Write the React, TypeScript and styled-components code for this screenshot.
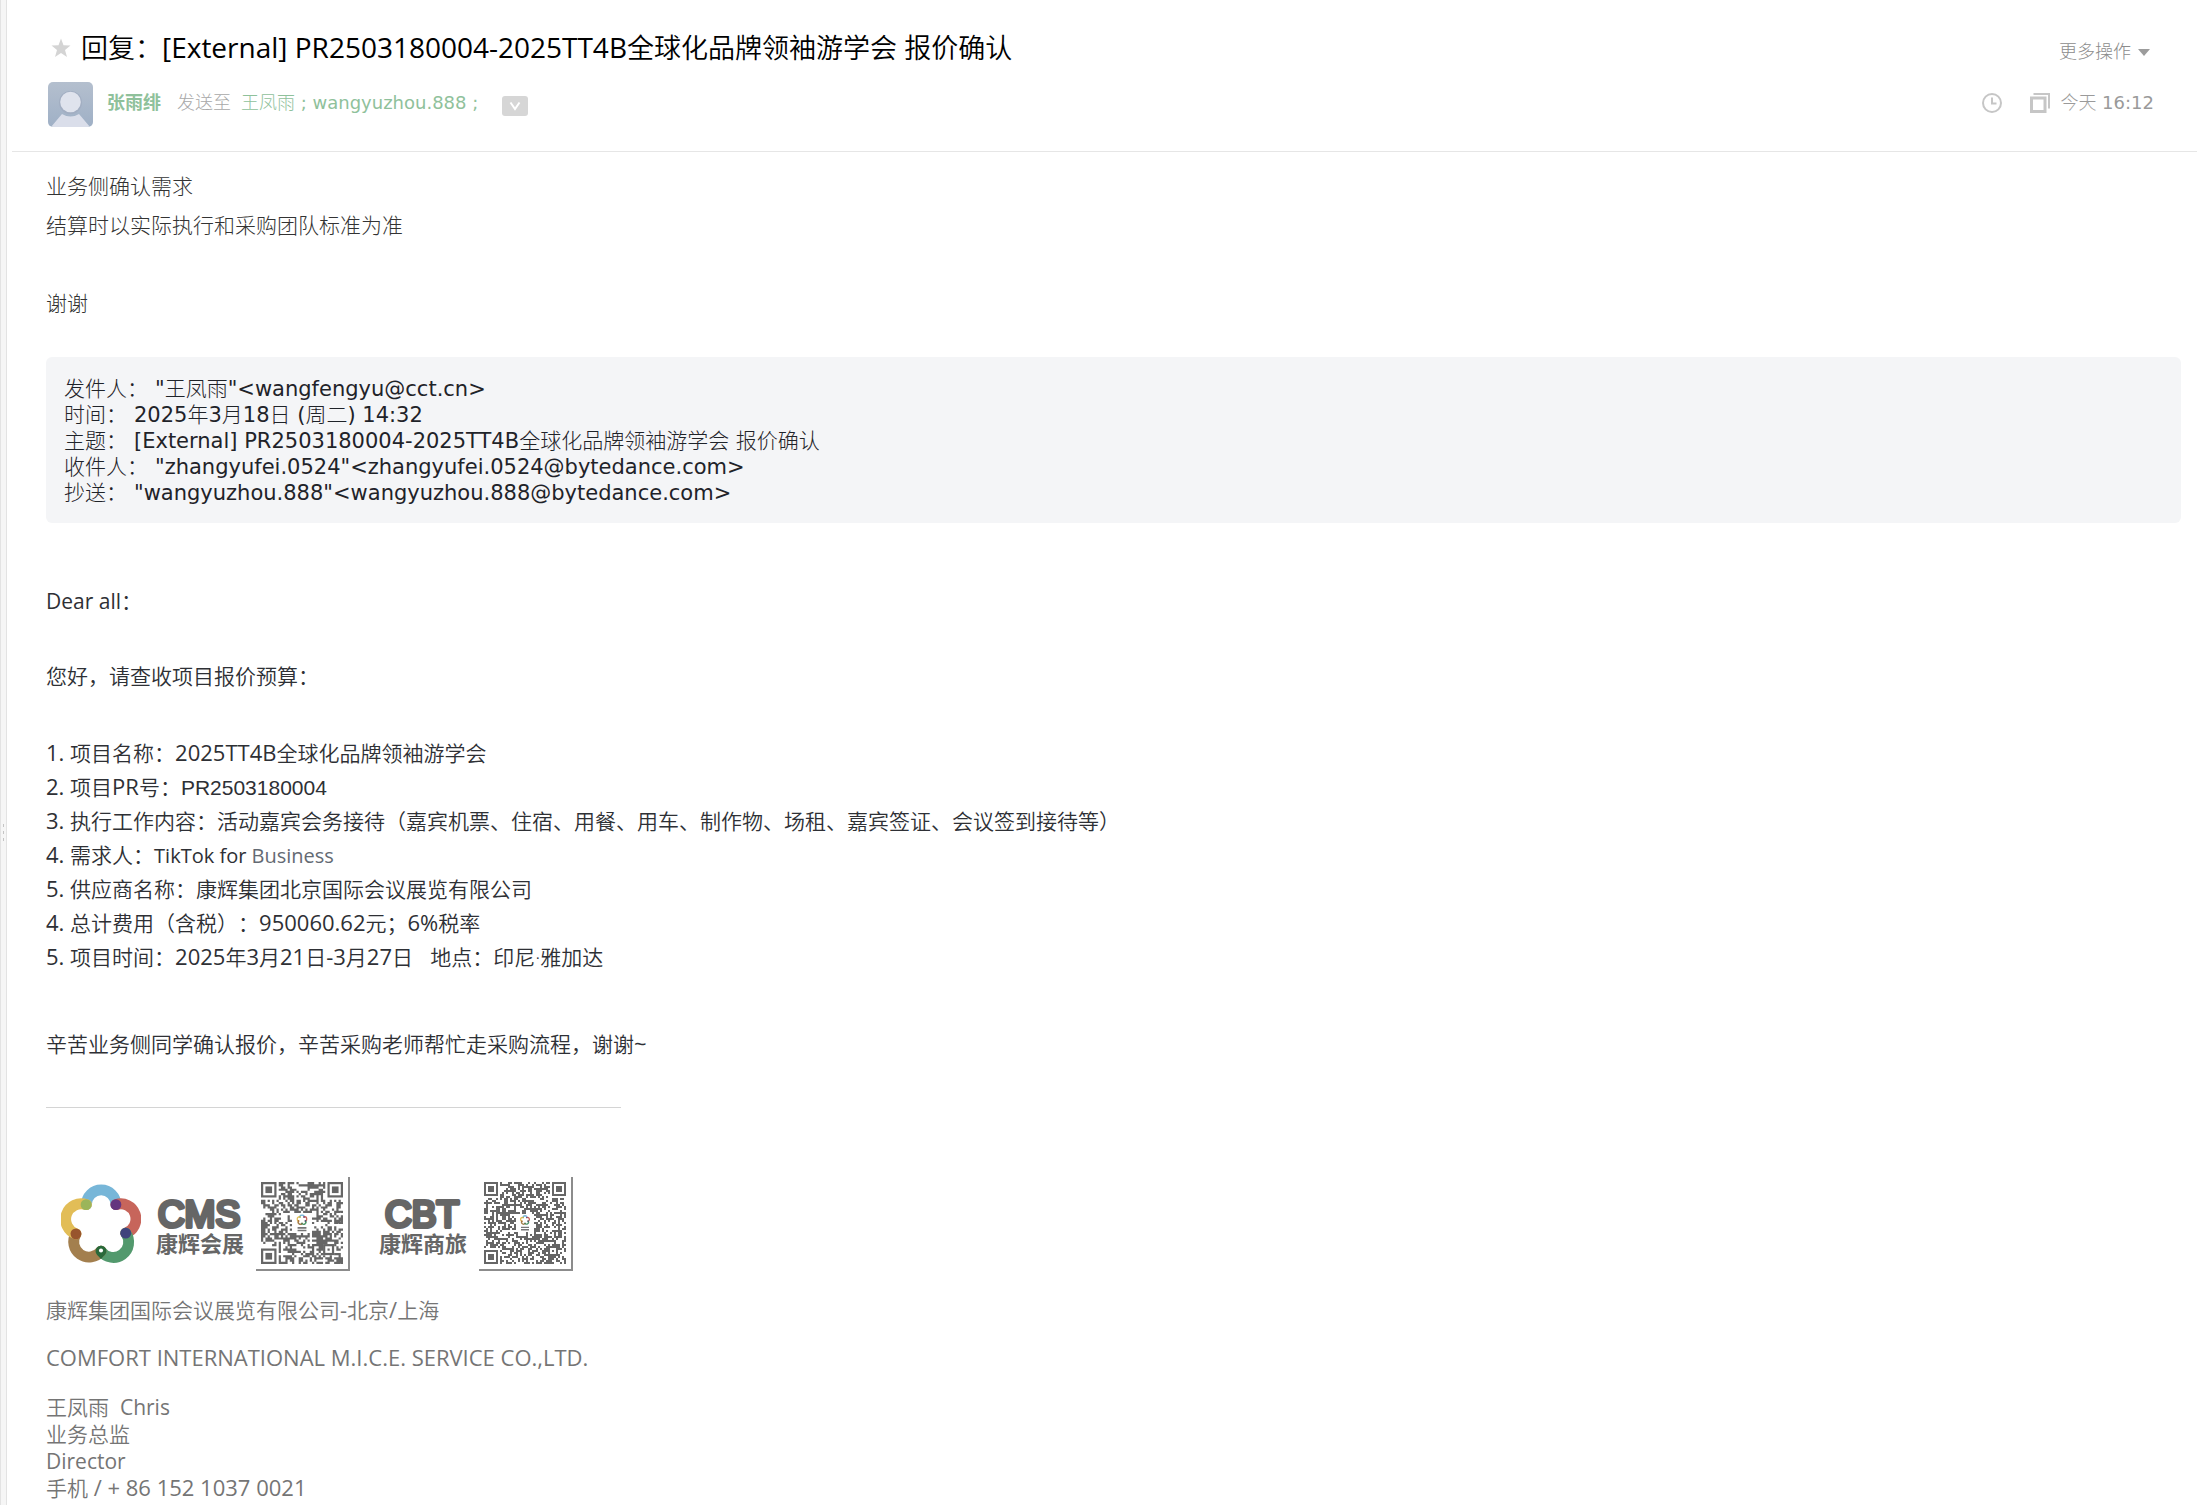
import React from "react";
import styled, { createGlobalStyle } from "styled-components";

const SANS = `"Open Sans", "Noto Sans CJK SC", sans-serif`;
const WIDE = `"DejaVu Sans", "Noto Sans CJK SC", sans-serif`;

const GlobalStyle = createGlobalStyle`
  * { box-sizing: border-box; }
  body { margin: 0; background: #fff; font-family: ${SANS}; text-spacing-trim: space-all; }
  h1, p, ul, dl, dd { margin: 0; padding: 0; }
  button { border: 0; padding: 0; background: none; font: inherit; color: inherit; cursor: pointer; }
  a { color: inherit; text-decoration: none; }
`;

const Page = styled.div`
  display: flex;
  min-height: 100vh;
`;

const Splitter = styled.div`
  flex: none;
  width: 7px;
  display: flex;
  flex-direction: column;
  align-items: center;
  gap: 4px;
  padding-top: 824px;
  background: #f6f6f6;
  border: solid #e3e3e3;
  border-width: 0 1px;
`;

const Grip = styled.span`
  width: 1px;
  height: 3px;
  background: #c4c4c4;
`;

const Mail = styled.main`
  flex: 1;
  min-width: 0;
`;

const Latin = styled.span<{ $size?: number }>`
  font-size: ${(p) => (p.$size ? `${p.$size}px` : "inherit")};
  font-weight: 400;
  line-height: 1;
`;

const Header = styled.header`
  margin-left: 5px;
  padding: 30px 43px 24px 36px;
  border-bottom: 1px solid #e6e6e6;
`;

const HeaderRow = styled.div<{ $top?: boolean }>`
  display: flex;
  align-items: center;
  justify-content: space-between;
  min-height: 36px;
  margin-bottom: ${(p) => (p.$top ? 16 : 0)}px;
`;

const Group = styled.div<{ $gap: number }>`
  display: flex;
  align-items: center;
  gap: ${(p) => p.$gap}px;
`;

const StarButton = styled.button`
  display: flex;
  padding-left: 3px;
`;

const Title = styled.h1`
  font-size: 27px;
  line-height: 36px;
  font-weight: 350;
  color: #000;
  white-space: pre-wrap;
`;

const MoreButton = styled.button`
  display: flex;
  align-items: center;
  gap: 7px;
  padding: 8px 4px 0 0;
  font: 300 18px/24px ${WIDE};
  color: #8c8c8c;
`;

const Caret = styled.span`
  border: 6px solid transparent;
  border-top: 7px solid #9c9c9c;
  border-bottom: 0;
`;

const Avatar = styled.svg`
  width: 45px;
  height: 45px;
  border-radius: 5px;
  margin-right: 14px;
`;

const Meta = styled.div`
  display: flex;
  align-items: center;
  gap: 10px;
  margin-bottom: 4px;
  font: 300 18px/24px ${WIDE};
  color: #9a9a9a;
`;

const Sender = styled.a`
  font-weight: 700;
  color: #8fc19b;
  margin-right: 6px;
`;

const SentTo = styled.span`
  color: #a8a8a8;
`;

const Recipients = styled.span`
  color: #8fc19b;
  white-space: pre;
`;

const ExpandButton = styled.button`
  display: flex;
  align-items: center;
  justify-content: center;
  width: 26px;
  height: 20px;
  margin: 6px 0 0 14px;
  border-radius: 3px;
  background: #d6d6d6;
`;

const IconButton = styled.button`
  display: flex;
`;

const Body = styled.article`
  padding: 16px 16px 0 39px;
  font-size: 21px;
  font-weight: 350;
  line-height: 34px;
  color: #2e3035;
`;

const Reply = styled.div`
  font-family: ${WIDE};
  font-weight: 300;
  line-height: 39px;
  color: #333;
`;

const ReplyLine = styled.p`
  min-height: 39px;
`;

const Quoted = styled.dl`
  margin: 33px 0 61px;
  padding: 19px 18px 17px;
  border-radius: 6px;
  background: #f4f5f7;
  font: 300 21px/26px ${WIDE};
  color: #1f2329;
`;

const QuotedRow = styled.div`
  display: flex;
  gap: 7px;
`;

const QuotedLabel = styled.dt`
  flex: none;
`;

const Paragraph = styled.p<{ $after: number }>`
  margin-bottom: ${(p) => p.$after}px;
`;

const Items = styled.ul`
  margin-bottom: 53px;
  list-style: none;
  white-space: pre-wrap;
`;

const Faded = styled.span`
  color: #646a73;
`;

const Arial = styled(Latin)`
  font-family: "Liberation Sans", sans-serif;
`;

const Divider = styled.hr`
  width: 575px;
  max-width: 100%;
  height: 1px;
  margin: 46px 0 69px;
  border: 0;
  background: #d4d4d4;
`;

const Brands = styled.div`
  display: flex;
  align-items: center;
  margin-bottom: 26px;
  padding-left: 15px;
`;

const Ring = styled.svg`
  width: 80px;
  height: 80px;
  margin-right: 15px;
`;

const Brand = styled.div`
  width: 87px;
  margin-right: 13px;
  color: #666;
  font-family: "Noto Sans CJK SC", sans-serif;
  font-weight: 700;
  font-size: 22px;
  line-height: 20px;
  text-align: center;
  white-space: nowrap;
`;

const BrandMark = styled.svg`
  display: block;
  width: 87px;
  height: 36px;
  overflow: visible;
  font: 400 37px "Liberation Sans", sans-serif;
`;

const QrFrame = styled.div`
  width: 94px;
  height: 94px;
  margin-right: 29px;
  padding: 5px;
  border: solid #8c8c8c;
  border-width: 0 2px 2px 0;
`;

const Signature = styled.footer`
  line-height: 27px;
  color: #757575;
  white-space: pre-wrap;
`;

const ARCS = [
  { d: "M140 138A43.500 43.500 0 0 1 227 138", color: "#77b6d8" },
  { d: "M227 138A44.400 44.400 0 0 1 256 222", color: "#c7655b" },
  { d: "M256 222A45 45 0 0 1 183 275", color: "#52996d" },
  { d: "M183 275A45 45 0 0 1 109 224", color: "#a37f4e" },
  { d: "M109 224A44.400 44.400 0 0 1 140 138", color: "#e2bd57" },
];

const JOINTS = [
  { x: 139, y: 138, color: "#9bb55a" },
  { x: 227, y: 138, color: "#64357f" },
  { x: 256, y: 222, color: "#3f437c" },
  { x: 109, y: 224, color: "#98552d" },
];

function RingArt() {
  return (
    <>
      {ARCS.map((a) => (
        <path key={a.color} d={a.d} fill="none" stroke={a.color} strokeWidth="32" strokeLinecap="round" />
      ))}
      {JOINTS.map((j) => (
        <circle key={j.color} cx={j.x} cy={j.y} r="16" fill={j.color} />
      ))}
      <path d="M183 299C176 290 167 285 167 275A16 16 0 0 1 199 275C199 285 190 290 183 299Z" fill="#28693a" />
      <circle cx="183" cy="273" r="6" fill="#fff" />
    </>
  );
}

function BrandName({ mark, name }: { mark: string; name: string }) {
  return (
    <Brand>
      <BrandMark viewBox="0 0 87 36">
        <text x="43" y="31" textAnchor="middle" fill="#666" stroke="#666" strokeWidth="4" strokeLinejoin="round">
          {mark}
        </text>
      </BrandMark>
      {name}
    </Brand>
  );
}

function buildCells(n: number, seed: number) {
  let s = seed;
  const next = () => {
    s = (s * 1103515245 + 12345) % 2147483648;
    return s / 2147483648;
  };
  const mid = n / 2;
  let d = "";
  for (let y = 0; y < n; y++) {
    for (let x = 0; x < n; x++) {
      const on = next() > 0.46;
      const corner = (x < 8 && y < 8) || (x >= n - 8 && y < 8) || (x < 8 && y >= n - 8);
      const align = x >= n - 9 && x < n - 4 && y >= n - 9 && y < n - 4;
      const centre = Math.abs(x + 0.5 - mid) < 5 && Math.abs(y + 0.5 - mid) < 5;
      if (on && !corner && !align && !centre) d += `M${x} ${y}h1v1h-1z`;
    }
  }
  return d;
}

function QrCode({ n, seed, name }: { n: number; seed: number; name: string }) {
  const mid = n / 2;
  const finders = [[0, 0], [n - 7, 0], [0, n - 7]];
  return (
    <QrFrame>
      <svg width="82" height="82" viewBox={`0 0 ${n} ${n}`} role="img" aria-label={name}>
        <path d={buildCells(n, seed)} fill="#666" />
        {finders.map(([x, y]) => (
          <g key={`${x}-${y}`}>
            <rect x={x + 0.5} y={y + 0.5} width="6" height="6" fill="#fff" stroke="#666" />
            <rect x={x + 2} y={y + 2} width="3" height="3" fill="#666" />
          </g>
        ))}
        <rect x={n - 8.5} y={n - 8.5} width="4" height="4" fill="#fff" stroke="#666" />
        <rect x={n - 7} y={n - 7} width="1" height="1" fill="#666" />
        <svg x={mid - 2.5} y={mid - 4} width="5" height="5" viewBox="65 77 236 236">
          <RingArt />
        </svg>
        <path d={`M${mid - 2} ${mid + 2.2}h4M${mid - 2} ${mid + 3.4}h4`} stroke="#777" strokeWidth="0.7" />
      </svg>
    </QrFrame>
  );
}

/* Sets the western runs of a mixed line apart from the Chinese ones. */
function Mixed({ text, size }: { text: string; size?: number }) {
  return (
    <>
      {text.split(/([\u0020-\u007e]+)/).map((run, i) =>
        i % 2 ? (
          <Latin key={i} $size={size}>
            {run}
          </Latin>
        ) : (
          run
        )
      )}
    </>
  );
}

const QUOTED: [string, string][] = [
  ["发件人：", `"王凤雨"<wangfengyu@cct.cn>`],
  ["时间：", "2025年3月18日 (周二) 14:32"],
  ["主题：", "[External] PR2503180004-2025TT4B全球化品牌领袖游学会 报价确认"],
  ["收件人：", `"zhangyufei.0524"<zhangyufei.0524@bytedance.com>`],
  ["抄送：", `"wangyuzhou.888"<wangyuzhou.888@bytedance.com>`],
];

export default function App() {
  return (
    <Page lang="zh-CN">
      <GlobalStyle />
      <Splitter>
        <Grip />
        <Grip />
        <Grip />
      </Splitter>
      <Mail>
        <Header>
          <HeaderRow $top>
            <Group $gap={10}>
              <StarButton aria-label="星标">
                <svg width="20" height="20" viewBox="0 0 20 20">
                  <path d="M10 0.500L12.500 7.200L19.500 7.500L14 11.900L16 19L10 15L4 19L6 11.900L0.500 7.500L7.500 7.200Z" fill="#d4d4d4" />
                </svg>
              </StarButton>
              <Title>
                <Mixed size={28} text="回复：[External] PR2503180004-2025TT4B全球化品牌领袖游学会 报价确认" />
              </Title>
            </Group>
            <MoreButton>
              更多操作
              <Caret />
            </MoreButton>
          </HeaderRow>
          <HeaderRow>
            <Group $gap={0}>
              <Avatar viewBox="0 0 45 45" role="img" aria-label="头像">
                <defs>
                  <linearGradient id="sky" x1="0" y1="0" x2="0" y2="1">
                    <stop offset="0" stopColor="#b4bfce" />
                    <stop offset="1" stopColor="#9fb0c6" />
                  </linearGradient>
                </defs>
                <rect width="45" height="45" fill="url(#sky)" />
                <path d="M3 45L14 32Q22.500 37 31 32L42 45Z" fill="#dadeea" />
                <circle cx="22.500" cy="20.500" r="11.500" fill="#a2aec2" />
                <circle cx="22.500" cy="20" r="10.300" fill="#dfe3ed" />
              </Avatar>
              <Meta>
                <Sender href="#sender">张雨绯</Sender>
                <SentTo>发送至</SentTo>
                <Recipients>
                  <a href="#to-1">王凤雨</a>
                  <Latin>
                    {" ; "}
                    <a href="#to-2">wangyuzhou.888</a>
                    {" ;"}
                  </Latin>
                </Recipients>
                <ExpandButton aria-label="展开">
                  <svg width="12" height="10" viewBox="0 0 12 10">
                    <path d="M1.500 1.500L6 8L10.500 1.500" fill="none" stroke="#fff" strokeWidth="2" />
                  </svg>
                </ExpandButton>
              </Meta>
            </Group>
            <Meta>
              <Group $gap={28}>
                <IconButton aria-label="提醒">
                  <svg width="20" height="20" viewBox="0 0 20 20" fill="none" stroke="#c6c6c6" strokeWidth="2">
                    <circle cx="10" cy="10" r="9" />
                    <path d="M10 4.500V10.500H14.500" />
                  </svg>
                </IconButton>
                <IconButton aria-label="新窗口打开">
                  <svg width="20" height="20" viewBox="0 0 20 20" fill="none" stroke="#c6c6c6">
                    <rect x="1.500" y="5" width="13.500" height="13.500" strokeWidth="3" />
                    <path d="M3.500 1H19V15.500" strokeWidth="2" />
                  </svg>
                </IconButton>
              </Group>
              <time>
                <Mixed text="今天 16:12" />
              </time>
            </Meta>
          </HeaderRow>
        </Header>
        <Body>
          <Reply>
            <ReplyLine>业务侧确认需求</ReplyLine>
            <ReplyLine>结算时以实际执行和采购团队标准为准</ReplyLine>
            <ReplyLine />
            <ReplyLine>谢谢</ReplyLine>
          </Reply>
          <Quoted>
            {QUOTED.map(([label, value]) => (
              <QuotedRow key={label}>
                <QuotedLabel>{label}</QuotedLabel>
                <dd>
                  <Mixed text={value} />
                </dd>
              </QuotedRow>
            ))}
          </Quoted>
          <Paragraph $after={41}>
            <Mixed text="Dear all：" />
          </Paragraph>
          <Paragraph $after={43}>您好，请查收项目报价预算：</Paragraph>
          <Items>
            <li><Mixed size={22} text="1. 项目名称：2025TT4B全球化品牌领袖游学会" /></li>
            <li><Mixed size={22} text="2. 项目PR号：" /><Arial>PR2503180004</Arial></li>
            <li><Mixed size={22} text="3. 执行工作内容：活动嘉宾会务接待（嘉宾机票、住宿、用餐、用车、制作物、场租、嘉宾签证、会议签到接待等）" /></li>
            <li>
              <Mixed size={22} text="4. 需求人：" />
              <Latin $size={20}>TikTok for <Faded>Business</Faded></Latin>
            </li>
            <li><Mixed size={22} text="5. 供应商名称：康辉集团北京国际会议展览有限公司" /></li>
            <li><Mixed size={22} text="4. 总计费用（含税）：950060.62元；6%税率" /></li>
            <li><Mixed size={22} text="5. 项目时间：2025年3月21日-3月27日   地点：印尼·雅加达" /></li>
          </Items>
          <Paragraph $after={0}>
            <Mixed size={22} text="辛苦业务侧同学确认报价，辛苦采购老师帮忙走采购流程，谢谢~" />
          </Paragraph>
          <Divider />
          <Brands>
            <Ring viewBox="65 77 236 236" role="img" aria-label="康辉">
              <RingArt />
            </Ring>
            <BrandName mark="CMS" name="康辉会展" />
            <QrCode n={37} seed={77} name="CMS" />
            <BrandName mark="CBT" name="康辉商旅" />
            <QrCode n={41} seed={2025} name="CBT" />
          </Brands>
          <Signature>
            <Paragraph $after={21}><Mixed size={22} text="康辉集团国际会议展览有限公司-北京/上海" /></Paragraph>
            <Paragraph $after={22}><Mixed size={22} text="COMFORT INTERNATIONAL M.I.C.E. SERVICE CO.,LTD." /></Paragraph>
            <Paragraph $after={0}><Mixed text="王凤雨  Chris" /></Paragraph>
            <Paragraph $after={0}>业务总监</Paragraph>
            <Paragraph $after={0}><Mixed text="Director" /></Paragraph>
            <Paragraph $after={0}><Mixed size={22} text="手机 / + 86 152 1037 0021" /></Paragraph>
          </Signature>
        </Body>
      </Mail>
    </Page>
  );
}
